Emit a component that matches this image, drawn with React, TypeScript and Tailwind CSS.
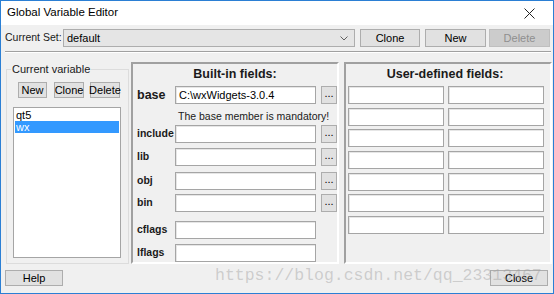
const btnBase = "flex items-center justify-center border text-[11px] leading-none whitespace-nowrap";
const btn = `${btnBase} bg-[#e1e1e1] border-[#adadad] text-black`;
const btnDisabled = `${btnBase} bg-[#cccccc] border-[#bfbfbf] text-[#8f8f8f]`;
const input = "bg-white border border-[#a5a5a5] shadow-[inset_1px_1px_0_#e6e6e6]";

function BuiltInRow({ label, value, big, browse = true, mt }: { label: string; value?: string; big?: boolean; browse?: boolean; mt: string }) {
  return (
    <div className={`flex items-center h-[18px] ${mt}`}>
      <span className={`w-[42px] shrink-0 pl-[4px] font-bold whitespace-nowrap ${big ? "text-[12.5px]" : "text-[10.5px]"} text-[#1a1a1a]`}>{label}</span>
      <div className={`${input} w-[141px] shrink-0 h-full flex items-center pl-[3px] text-[11px]`}>{value}</div>
      {browse && (
        <div className={`${btn} ml-[5px] w-[16px] h-full shrink-0 text-[10px] items-end pb-[4px]`}>...</div>
      )}
    </div>
  );
}

export default function App() {
  const userRows = [0, 1, 2, 3, 4, 5, 6];

  return (
    <div className="relative w-[554px] h-[294px] border border-[#2b7fd4] bg-[#f0f0f0] flex flex-col font-['Liberation_Sans',Arial,sans-serif] text-black overflow-hidden">
      {/* title bar */}
      <div className="h-[24px] bg-white flex items-center justify-between pl-[6px] pr-[18px] shrink-0">
        <span className="text-[11.5px]">Global Variable Editor</span>
        <svg width="11" height="11" viewBox="0 0 11 11" stroke="#222" strokeWidth="1">
          <path d="M0.5 0.5 L10.5 10.5 M10.5 0.5 L0.5 10.5" />
        </svg>
      </div>

      {/* current set row */}
      <div className="flex items-center h-[18px] mt-[4px] pl-[4px]">
        <span className="w-[58px] shrink-0 whitespace-nowrap text-[10.5px] text-[#1a1a1a]">Current Set:</span>
        <div className="w-[292px] shrink-0 h-full bg-[#e5e5e5] border border-[#adadad] flex items-center justify-between pl-[3px] pr-[6px] text-[11px]">
          <span>default</span>
          <svg width="8" height="5" viewBox="0 0 8 5" fill="none" stroke="#606060" strokeWidth="1">
            <path d="M0.5 0.5 L4 4 L7.5 0.5" />
          </svg>
        </div>
        <div className={`${btn} ml-[5px] w-[60px] h-full`}>Clone</div>
        <div className={`${btn} ml-[5px] w-[61px] h-full`}>New</div>
        <div className={`${btnDisabled} ml-[3px] w-[61px] h-full`}>Delete</div>
      </div>

      {/* separator */}
      <div className="mt-[4px] ml-[4px] mr-[2px] h-px bg-[#a0a0a0]" />
      <div className="ml-[4px] mr-[2px] h-px bg-white" />

      {/* main area */}
      <div className="flex mt-[9px] h-[202px]">
        <fieldset className="ml-[5px] w-[123px] h-full border border-[#dcdcdc] p-0 m-0 flex flex-col">
          <legend className="ml-[4px] px-[1px] text-[11px] leading-[14px] text-[#1a1a1a]">Current variable</legend>
          <div className="flex mt-[6px] ml-[11px] h-[16px]">
            <div className={`${btn} w-[29px] h-full`}>New</div>
            <div className={`${btn} ml-[7px] w-[30px] h-full`}>Clone</div>
            <div className={`${btn} ml-[6px] w-[30px] h-full text-[10.5px]`}>Delete</div>
          </div>
          <div className="mt-[9px] ml-[6px] w-[108px] h-[151px] bg-white border border-[#a5a5a5] p-[1px] text-[11px]">
            <div className="h-[12px] leading-[12px] pl-[1px]">qt5</div>
            <div className="h-[12px] leading-[12px] pl-[1px] bg-[#3399ff] text-white">wx</div>
          </div>
        </fieldset>

        {/* built-in fields */}
        <div className="ml-[2px] w-[208px] h-full border-2 border-t-[#a0a0a0] border-l-[#a0a0a0] border-r-white border-b-white overflow-hidden flex flex-col">
          <div className="h-[20px] leading-[20px] text-center text-[12.5px] font-bold text-[#1a1a1a]">Built-in fields:</div>
          <BuiltInRow label="base" value="C:\wxWidgets-3.0.4" big mt="mt-[2px]" />
          <div className="mt-[5px] ml-[45px] h-[14px] leading-[14px] text-[10.5px] whitespace-nowrap text-[#1a1a1a]">The base member is mandatory!</div>
          <BuiltInRow label="include" mt="mt-[2px]" />
          <BuiltInRow label="lib" mt="mt-[5px]" />
          <BuiltInRow label="obj" mt="mt-[6px]" />
          <BuiltInRow label="bin" mt="mt-[4px]" />
          <BuiltInRow label="cflags" browse={false} mt="mt-[9px]" />
          <BuiltInRow label="lflags" browse={false} mt="mt-[5px]" />
        </div>

        {/* user-defined fields */}
        <div className="ml-[5px] w-[208px] h-full border-2 border-t-[#a0a0a0] border-l-[#a0a0a0] border-r-white border-b-white flex flex-col">
          <div className="h-[20px] leading-[20px] text-center text-[12.5px] font-bold text-[#1a1a1a] pr-[6px]">User-defined fields:</div>
          <div className="mt-[2px] ml-[2px] grid grid-cols-[96px_96px] gap-x-[4px] gap-y-[3.67px]">
            {userRows.map((r) => (
              <div key={r} className="contents">
                <div className={`${input} h-[18px]`} />
                <div className={`${input} h-[18px]`} />
              </div>
            ))}
          </div>
        </div>
      </div>

      {/* bottom buttons */}
      <div className="flex justify-between mt-[6px] pl-[4px] pr-[5px] h-[16px]">
        <div className={`${btn} w-[58px] h-full`}>Help</div>
        <div className={`${btn} w-[58px] h-full`}>Close</div>
      </div>

      {/* watermark */}
      <div className="absolute left-[214px] top-[263px] pointer-events-none font-['Liberation_Mono',monospace] text-[16.5px] text-[#a0a0a0]/45 whitespace-nowrap">
        https://blog.csdn.net/qq_23313467
      </div>
    </div>
  );
}
